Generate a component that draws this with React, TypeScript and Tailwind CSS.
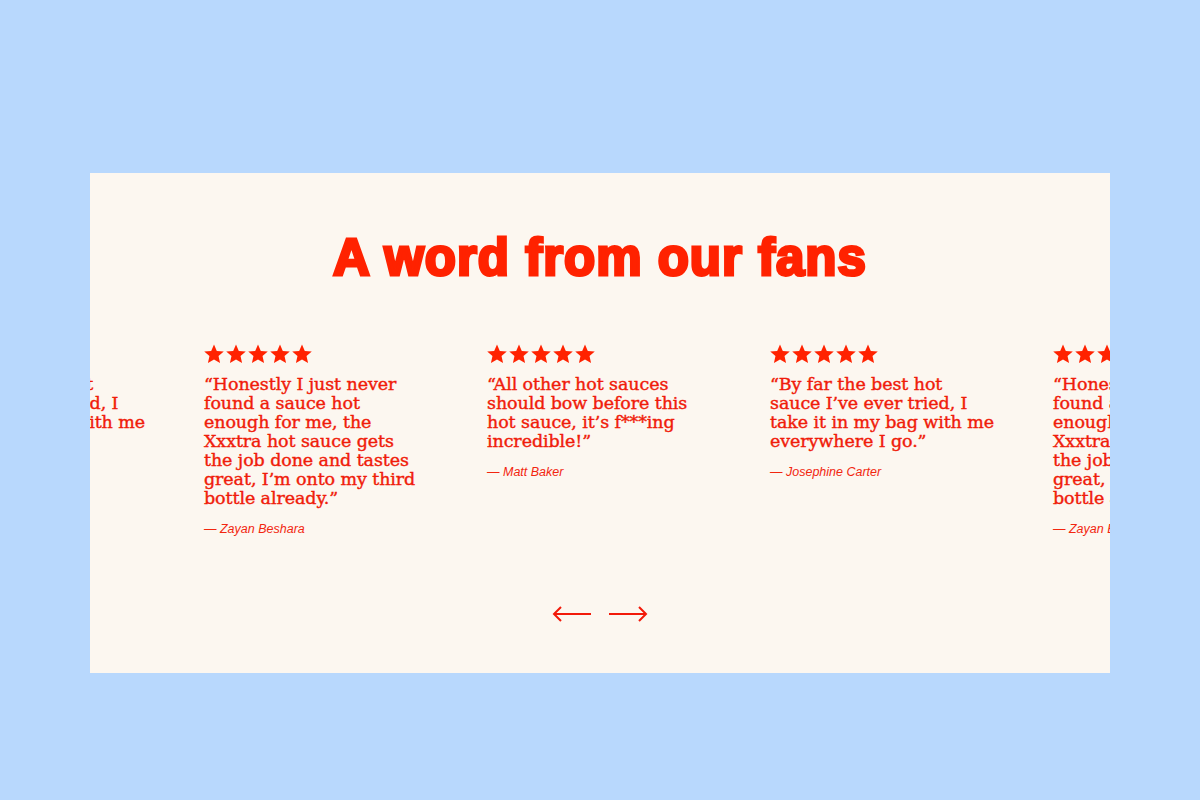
const REVIEWS = [
  {
    lines: ['“By far the best hot', 'sauce I’ve ever tried, I', 'take it in my bag with me', 'everywhere I go.”'],
    author: 'Josephine Carter',
  },
  {
    lines: [
      '“Honestly I just never',
      'found a sauce hot',
      'enough for me, the',
      'Xxxtra hot sauce gets',
      'the job done and tastes',
      'great, I’m onto my third',
      'bottle already.”',
    ],
    author: 'Zayan Beshara',
  },
  {
    lines: ['“All other hot sauces', 'should bow before this', 'hot sauce, it’s f***ing', 'incredible!”'],
    author: 'Matt Baker',
  },
]

// the track shows one card either side of the three full ones, clipped by the panel
const TRACK = [REVIEWS[0], REVIEWS[1], REVIEWS[2], REVIEWS[0], REVIEWS[1]]

export default function App() {
  return (
    <div className="min-h-screen w-full bg-[#b8d8fd] px-[90px] pt-[173px]">
      <section className="flex h-[500px] w-full flex-col items-center overflow-hidden bg-[#fcf7f0] pt-[57px]">
        <h2 className="font-['Liberation_Sans',Arial,sans-serif] text-[51px] font-bold leading-[56px] tracking-[1px] text-[#ff2200] [-webkit-text-stroke:3px_#ff2200]">
          A word from our fans
        </h2>

        <div className="mt-[58px] flex w-full justify-center gap-[57px]">
          {TRACK.map((r, i) => (
            <Review key={i} lines={r.lines} author={r.author} />
          ))}
        </div>

        <div className="mt-auto mb-[51px] flex items-center gap-4">
          <button aria-label="Previous" className="text-[#f21a0a]">
            <Arrow dir="left" />
          </button>
          <button aria-label="Next" className="text-[#f21a0a]">
            <Arrow dir="right" />
          </button>
        </div>
      </section>
    </div>
  )
}

function Review({ lines, author }: { lines: string[]; author: string }) {
  return (
    <div className="h-[200px] w-[226px] shrink-0">
      <div className="flex gap-[2px]">
        {[0, 1, 2, 3, 4].map((s) => (
          <Star key={s} />
        ))}
      </div>
      <p className="mt-[12px] whitespace-nowrap font-['DejaVu_Serif',Georgia,serif] text-[17.5px] leading-[19px] tracking-[-0.1px] text-[#f01c0a] [-webkit-text-stroke:0.4px_#f01c0a]">
        {lines.map((l, i) => (
          <span key={i} className="block">
            {l}
          </span>
        ))}
      </p>
      <p className="mt-[12px] font-['Liberation_Sans',Arial,sans-serif] text-[12.5px] italic text-[#f2260f]">— {author}</p>
    </div>
  )
}

function Star() {
  return (
    <svg viewBox="1 1 22 21" className="h-[19px] w-[20px]" fill="#ff2200">
      <path d="M12 1.5l3.1 7.1 7.7.7-5.8 5.1 1.7 7.6L12 18l-6.7 4 1.7-7.6L1.2 9.3l7.7-.7z" />
    </svg>
  )
}

function Arrow({ dir }: { dir: 'left' | 'right' }) {
  return (
    <svg viewBox="0 0 40 16" className="h-[16px] w-[40px]" fill="none" stroke="currentColor" strokeWidth="2">
      {dir === 'left' ? (
        <path d="M39 8H2M9 1L2 8l7 7" />
      ) : (
        <path d="M1 8h37M31 1l7 7-7 7" />
      )}
    </svg>
  )
}
